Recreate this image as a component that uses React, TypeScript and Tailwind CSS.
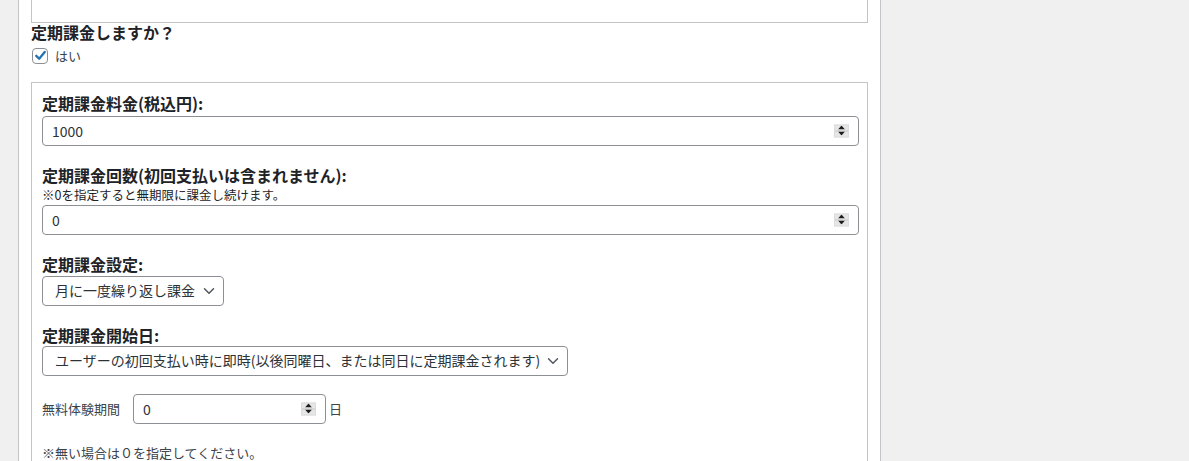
import { ChevronDown } from "lucide-react";

const font = { fontFamily: '"Segoe UI", "Noto Sans CJK JP", "Noto Sans", sans-serif' };

// Windows風の数値スピナー
const Spinner = () => (
  <span className="absolute right-[9px] top-1/2 -translate-y-1/2 flex h-[13px] w-[15px] flex-col border border-[#dcdcdc] bg-[#e6e6e6]">
    <span className="flex flex-1 items-center justify-center border-b border-[#c8c8c8]">
      <svg width="7" height="4" viewBox="0 0 7 4">
        <path d="M0 4 L3.5 0 L7 4 Z" fill="#1d1d1d" />
      </svg>
    </span>
    <span className="flex flex-1 items-center justify-center">
      <svg width="7" height="4" viewBox="0 0 7 4">
        <path d="M0 0 L3.5 4 L7 0 Z" fill="#1d1d1d" />
      </svg>
    </span>
  </span>
);

const NumberInput = ({ value, className }: { value: string; className: string }) => (
  <div className={`relative h-[30px] rounded-[4px] border border-[#8c8f94] bg-white ${className}`}>
    <input
      type="text"
      defaultValue={value}
      className="h-full w-full bg-transparent pl-[9px] pr-8 text-[14px] text-[#2c3338] outline-none"
    />
    <Spinner />
  </div>
);

const Select = ({ label, className }: { label: string; className: string }) => (
  <div
    className={`flex h-[30px] items-center justify-between rounded-[4px] border border-[#8c8f94] bg-white pl-[12px] pr-[5px] text-[14px] text-[#2c3338] ${className}`}
  >
    <span>{label}</span>
    <ChevronDown size={18} strokeWidth={2} className="text-[#50575e]" />
  </div>
);

const Label = ({ children }: { children: React.ReactNode }) => (
  <div className="text-[16px] font-bold leading-[22px] text-[#1d2327]">{children}</div>
);

export default function App() {
  return (
    <div className="flex h-[461px] w-[1189px] overflow-hidden bg-[#f0f0f0]" style={font}>
      <div className="ml-[18px] h-full w-[863px] border-x border-[#c3c4c7] bg-white pl-[12px] pr-[12px]">
        {/* 上のボックス（切れている） */}
        <div className="h-[23px] border border-t-0 border-[#c3c4c7]" />

        <h3 className="-mt-[1px] text-[16px] font-bold leading-[20px] text-[#1d2327]">定期課金しますか？</h3>
        <label className="mt-[4px] flex items-center gap-[7px] text-[13px] text-[#3c434a]">
          <span className="ml-[1px] flex h-[16px] w-[16px] items-center justify-center rounded-[4px] border border-[#8c8f94] bg-white">
            <svg width="13" height="13" viewBox="0 0 20 20">
              <path d="M3.5 10.5 L8 15 L16.5 4.5" fill="none" stroke="#2271b1" strokeWidth="3.5" strokeLinecap="round" strokeLinejoin="round" />
            </svg>
          </span>
          はい
        </label>

        <div className="mt-[16px] h-[400px] border border-[#c3c4c7] pl-[10px] pr-[8px] pt-[9px]">
          <Label>定期課金料金(税込円):</Label>
          <NumberInput value="1000" className="mt-[2px]" />

          <div className="mt-[18px]">
            <Label>定期課金回数(初回支払いは含まれません):</Label>
          </div>
          <div className="mt-[2px] text-[12.5px] leading-[14px] text-[#1d2327]">※0を指定すると無期限に課金し続けます。</div>
          <NumberInput value="0" className="mt-[3px]" />

          <div className="mt-[18px]">
            <Label>定期課金設定:</Label>
          </div>
          <Select label="月に一度繰り返し課金" className="mt-[1px] w-[182px]" />

          <div className="mt-[18px]">
            <Label>定期課金開始日:</Label>
          </div>
          <Select
            label="ユーザーの初回支払い時に即時(以後同曜日、または同日に定期課金されます)"
            className="mt-0 w-[526px]"
          />

          <div className="mt-[18px] flex items-center text-[13px] text-[#3c434a]">
            <span className="w-[91px]">無料体験期間</span>
            <NumberInput value="0" className="w-[193px]" />
            <span className="ml-[3px]">日</span>
          </div>

          <div className="mt-[19px] text-[13px] text-[#3c434a]">※無い場合は０を指定してください。</div>
        </div>
      </div>
    </div>
  );
}
